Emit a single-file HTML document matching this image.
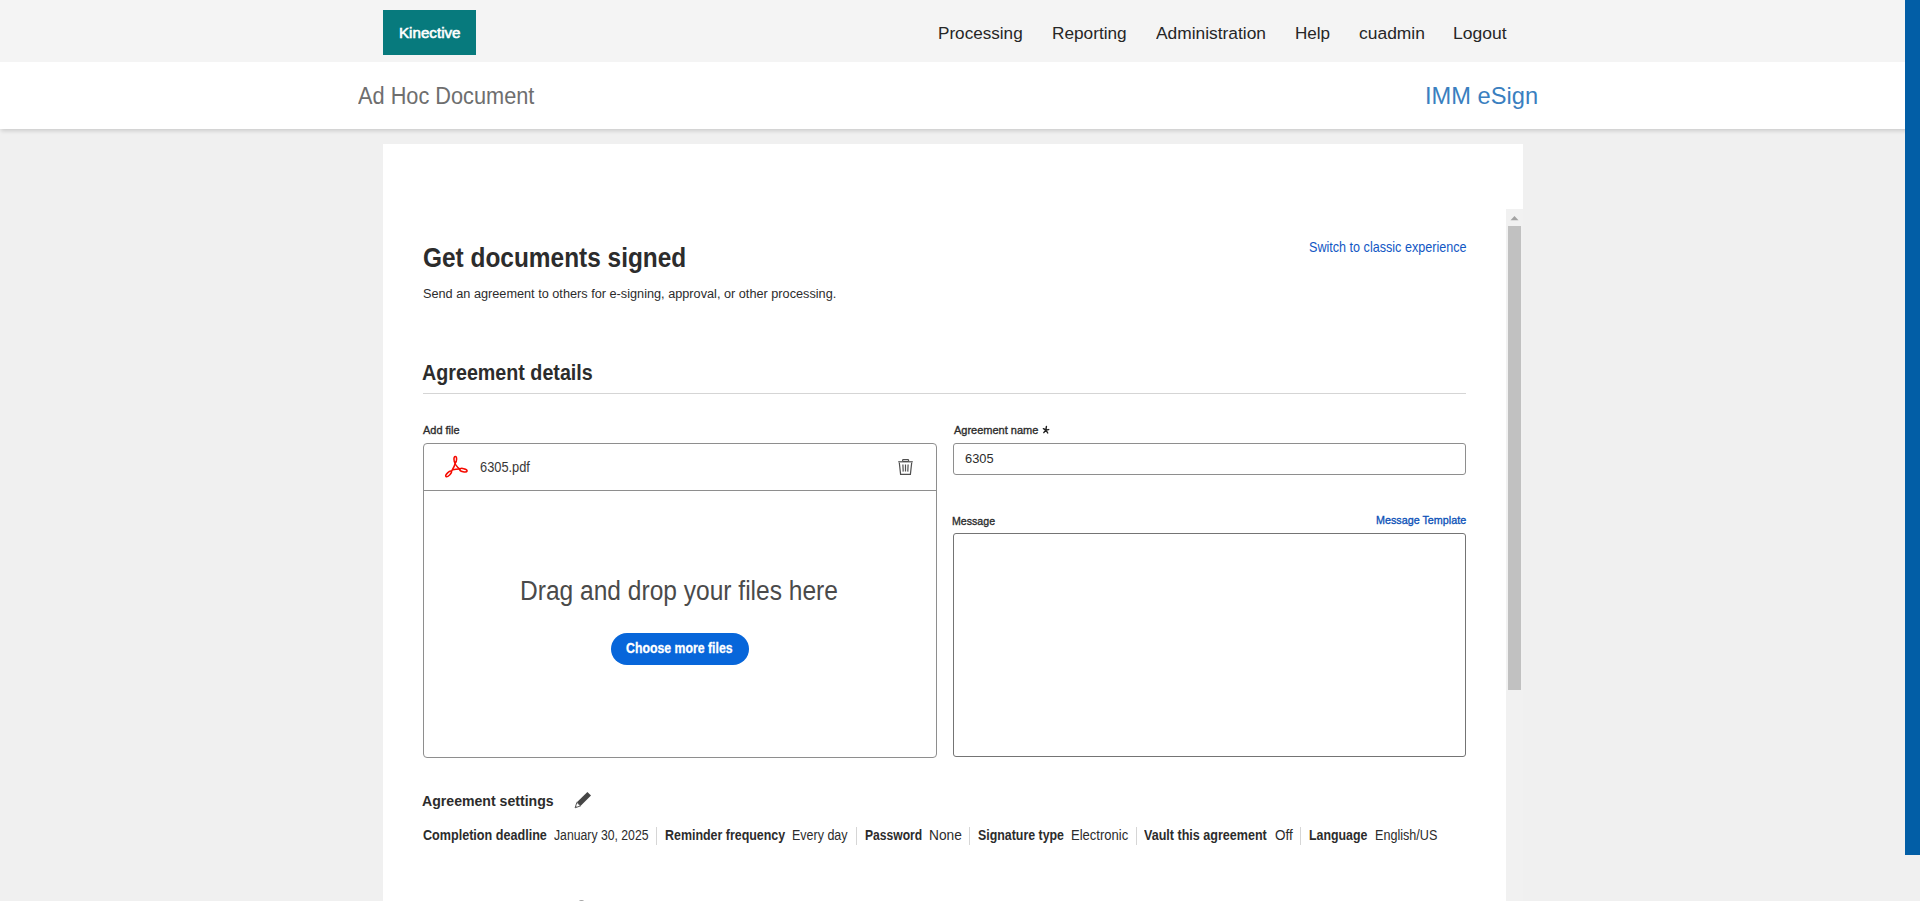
<!DOCTYPE html>
<html><head><meta charset="utf-8"><title>Ad Hoc Document</title>
<style>
html,body{margin:0;padding:0;}
body{width:1920px;height:901px;overflow:hidden;position:relative;background:#f0f0f0;font-family:"Liberation Sans",sans-serif;}
.t{position:absolute;white-space:nowrap;line-height:1;transform-origin:0 0;}
.abs{position:absolute;}
.sep{position:absolute;top:827px;width:1px;height:18px;background:#d6d6d6;}
svg{position:absolute;overflow:visible;}
</style></head><body>
<!-- top header bar -->
<div class="abs" style="left:0;top:0;width:1920px;height:62px;background:#f4f4f4"></div>
<div class="abs" style="left:0;top:62px;width:1920px;height:67px;background:#ffffff;box-shadow:0 3px 4px -1px rgba(0,0,0,0.15)"></div>
<div class="abs" style="left:383px;top:10px;width:93px;height:45px;background:#077a7d"></div>
<!-- card -->
<div class="abs" style="left:383px;top:144px;width:1140px;height:757px;background:#ffffff"></div>
<!-- iframe scrollbar -->
<div class="abs" style="left:1506px;top:209px;width:17px;height:692px;background:#f1f1f1"></div>
<div class="abs" style="left:1508px;top:226px;width:13px;height:464px;background:#c1c1c1"></div>
<svg style="left:1506px;top:209px" width="17" height="17"><path d="M4.5 11.2 L8.5 7 L12.5 11.2 Z" fill="#a3a3a3"/></svg>
<!-- right blue bar -->
<div class="abs" style="left:1905px;top:0;width:15px;height:855px;background:#025ea6"></div>
<!-- divider -->
<div class="abs" style="left:423px;top:393px;width:1043px;height:1px;background:#d5d5d5"></div>
<!-- file box -->
<div class="abs" style="left:423px;top:443px;width:512px;height:313px;border:1px solid #8e8e8e;border-radius:4px"></div>
<div class="abs" style="left:424px;top:490px;width:512px;height:1px;background:#8e8e8e"></div>
<!-- pdf icon -->
<svg style="left:441px;top:452px" width="30" height="30" viewBox="0 0 30 30">
 <g fill="none" stroke="#f50a00" stroke-width="1.55" stroke-linecap="round" stroke-linejoin="round">
  <path d="M14.2 11.2 C12.7 9.6 12.4 4.4 14.3 4.4 C16.2 4.4 15.9 9.6 14.2 11.2 Z"/>
  <path d="M14.2 11.2 C13.8 13.5 12.6 16 10.6 19.2"/>
  <ellipse cx="7.6" cy="21.9" rx="3.7" ry="1.45" transform="rotate(-44 7.6 21.9)"/>
  <path d="M14.6 12.6 C15.8 14.2 16.8 15.8 18.6 17"/>
  <ellipse cx="22.4" cy="18.2" rx="3.75" ry="1.6" transform="rotate(12 22.4 18.2)"/>
  <path d="M11.8 17.7 C14 17.3 16.4 17.1 18.6 17"/>
 </g>
</svg>
<!-- trash icon -->
<svg style="left:896px;top:457px" width="20" height="20" viewBox="0 0 20 20">
 <g fill="none" stroke="#505050" stroke-width="1.2">
  <rect x="6.6" y="2.5" width="6" height="1.9" rx="0.8"/>
  <path d="M2.2 4.8 H16.8"/>
  <path d="M3.3 5.6 L4.6 17.4 H14.4 L15.7 5.6"/>
  <path d="M6.9 7.5 L7.2 14.6 M9.5 7.5 V14.6 M12.1 7.5 L11.8 14.6"/>
 </g>
</svg>
<!-- agreement name input -->
<div class="abs" style="left:953px;top:443px;width:511px;height:30px;border:1px solid #8e8e8e;border-radius:3px"></div>
<!-- asterisk -->
<svg style="left:1038px;top:422px" width="16" height="16" viewBox="0 0 16 16">
 <g stroke="#222" stroke-width="1.45" stroke-linecap="round">
  <path d="M7.9 8 L8.4 4.5 M7.9 8 L5.4 6.7 M7.9 8 L10.7 7.6 M7.9 8 L5.8 10.6 M7.9 8 L9.7 11"/>
 </g>
</svg>
<!-- textarea -->
<div class="abs" style="left:953px;top:533px;width:511px;height:222px;border:1px solid #747474;border-radius:3px"></div>
<!-- button -->
<div class="abs" style="left:611px;top:633px;width:138px;height:32px;background:#0766da;border-radius:16px"></div>
<!-- pencil -->
<svg style="left:570px;top:787px" width="26" height="26" viewBox="0 0 26 26">
 <path d="M17.4 5 L21 8.5 L10.5 18.9 L6.9 15.3 Z" fill="#464646"/>
 <path d="M6.9 15.3 L10.5 18.9 L5.1 20.8 Z" fill="none" stroke="#5a5a5a" stroke-width="1" stroke-linejoin="round"/>
 <path d="M5.1 20.8 L5.8 18.9 L7 20.1 Z" fill="#5a5a5a"/>
</svg>
<!-- separators -->
<div class="sep" style="left:656px"></div>
<div class="sep" style="left:856px"></div>
<div class="sep" style="left:969px"></div>
<div class="sep" style="left:1136px"></div>
<div class="sep" style="left:1300px"></div>
<!-- partial icon at bottom -->
<div class="abs" style="left:576.5px;top:899.6px;width:9px;height:9px;border-radius:50%;border:1.6px solid #8a8a8a;box-sizing:border-box"></div>
<div class="t" id="kin" style="left:399.28px;top:24.60px;font-size:15.36px;font-weight:normal;-webkit-text-stroke:0.6px #ffffff;color:#ffffff;transform:scaleX(0.9872)">Kinective</div>
<div class="t" id="nav1" style="left:938.49px;top:25.44px;font-size:17.20px;font-weight:normal;color:#262626;transform:scaleX(0.9957)">Processing</div>
<div class="t" id="nav2" style="left:1051.80px;top:25.44px;font-size:17.20px;font-weight:normal;color:#262626;transform:scaleX(1.0015)">Reporting</div>
<div class="t" id="nav3" style="left:1155.55px;top:25.44px;font-size:17.20px;font-weight:normal;color:#262626;transform:scaleX(1.0103)">Administration</div>
<div class="t" id="nav4" style="left:1294.73px;top:25.44px;font-size:17.20px;font-weight:normal;color:#262626;transform:scaleX(0.9928)">Help</div>
<div class="t" id="nav5" style="left:1359.27px;top:25.44px;font-size:17.20px;font-weight:normal;color:#262626;transform:scaleX(1.0150)">cuadmin</div>
<div class="t" id="nav6" style="left:1453.15px;top:25.44px;font-size:17.20px;font-weight:normal;color:#262626;transform:scaleX(1.0189)">Logout</div>
<div class="t" id="adhoc" style="left:358.00px;top:85.25px;font-size:23.33px;font-weight:normal;color:#6e6e6e;transform:scaleX(0.9319)">Ad Hoc Document</div>
<div class="t" id="imm" style="left:1424.75px;top:84.12px;font-size:24.78px;font-weight:normal;color:#3a7fc0;transform:scaleX(0.9553)">IMM eSign</div>
<div class="t" id="getdocs" style="left:422.67px;top:244.70px;font-size:26.81px;font-weight:bold;color:#2c2c2c;transform:scaleX(0.9114)">Get documents signed</div>
<div class="t" id="send" style="left:422.93px;top:288.03px;font-size:12.61px;font-weight:normal;color:#2c2c2c;transform:scaleX(1.0079)">Send an agreement to others for e-signing, approval, or other processing.</div>
<div class="t" id="switch" style="left:1309.28px;top:239.69px;font-size:14.78px;font-weight:normal;color:#1257c4;transform:scaleX(0.8530)">Switch to classic experience</div>
<div class="t" id="agrdet" style="left:422.23px;top:362.48px;font-size:21.88px;font-weight:bold;color:#2c2c2c;transform:scaleX(0.9005)">Agreement details</div>
<div class="t" id="addfile" style="left:423.20px;top:424.90px;font-size:11.81px;font-weight:normal;-webkit-text-stroke:0.35px #2c2c2c;color:#2c2c2c;transform:scaleX(0.9297)">Add file</div>
<div class="t" id="pdfname" style="left:479.99px;top:460.08px;font-size:14.20px;font-weight:normal;color:#383838;transform:scaleX(0.9040)">6305.pdf</div>
<div class="t" id="agrname" style="left:953.55px;top:425.31px;font-size:11.45px;font-weight:normal;-webkit-text-stroke:0.35px #2c2c2c;color:#2c2c2c;transform:scaleX(0.9612)">Agreement name</div>
<div class="t" id="v6305" style="left:964.67px;top:451.96px;font-size:13.04px;font-weight:normal;color:#2c2c2c;transform:scaleX(0.9853)">6305</div>
<div class="t" id="message" style="left:952.43px;top:516.19px;font-size:11.59px;font-weight:normal;-webkit-text-stroke:0.35px #2c2c2c;color:#2c2c2c;transform:scaleX(0.9163)">Message</div>
<div class="t" id="msgtpl" style="left:1375.67px;top:515.19px;font-size:11.59px;font-weight:normal;-webkit-text-stroke:0.35px #0d52b8;color:#0d52b8;transform:scaleX(0.9293)">Message Template</div>
<div class="t" id="drag" style="left:520.41px;top:577.80px;font-size:26.81px;font-weight:normal;color:#4a4a4a;transform:scaleX(0.9161)">Drag and drop your files here</div>
<div class="t" id="choose" style="left:626.00px;top:642.22px;font-size:13.91px;font-weight:bold;-webkit-text-stroke:0.3px #ffffff;color:#ffffff;transform:scaleX(0.8839)">Choose more files</div>
<div class="t" id="agrset" style="left:422.36px;top:792.87px;font-size:15.51px;font-weight:bold;color:#2c2c2c;transform:scaleX(0.9099)">Agreement settings</div>
<div class="t" id="s1" style="left:423.08px;top:829.12px;font-size:13.80px;font-weight:bold;color:#2c2c2c;transform:scaleX(0.9126)">Completion deadline</div>
<div class="t" id="s2" style="left:554.33px;top:829.12px;font-size:13.80px;font-weight:normal;color:#2c2c2c;transform:scaleX(0.8866)">January 30, 2025</div>
<div class="t" id="s3" style="left:665.07px;top:829.12px;font-size:13.80px;font-weight:bold;color:#2c2c2c;transform:scaleX(0.9010)">Reminder frequency</div>
<div class="t" id="s4" style="left:792.16px;top:829.12px;font-size:13.80px;font-weight:normal;color:#2c2c2c;transform:scaleX(0.9050)">Every day</div>
<div class="t" id="s5" style="left:864.55px;top:829.12px;font-size:13.80px;font-weight:bold;color:#2c2c2c;transform:scaleX(0.8779)">Password</div>
<div class="t" id="s6" style="left:928.55px;top:829.12px;font-size:13.80px;font-weight:normal;color:#2c2c2c;transform:scaleX(0.9937)">None</div>
<div class="t" id="s7" style="left:977.80px;top:829.12px;font-size:13.80px;font-weight:bold;color:#2c2c2c;transform:scaleX(0.8971)">Signature type</div>
<div class="t" id="s8" style="left:1070.91px;top:829.12px;font-size:13.80px;font-weight:normal;color:#2c2c2c;transform:scaleX(0.9444)">Electronic</div>
<div class="t" id="s9" style="left:1144.36px;top:829.12px;font-size:13.80px;font-weight:bold;color:#2c2c2c;transform:scaleX(0.9099)">Vault this agreement</div>
<div class="t" id="s10" style="left:1275.02px;top:829.12px;font-size:13.80px;font-weight:normal;color:#2c2c2c;transform:scaleX(0.9787)">Off</div>
<div class="t" id="s11" style="left:1308.69px;top:829.12px;font-size:13.80px;font-weight:bold;color:#2c2c2c;transform:scaleX(0.8958)">Language</div>
<div class="t" id="s12" style="left:1374.58px;top:829.12px;font-size:13.80px;font-weight:normal;color:#2c2c2c;transform:scaleX(0.9135)">English/US</div>
</body></html>
